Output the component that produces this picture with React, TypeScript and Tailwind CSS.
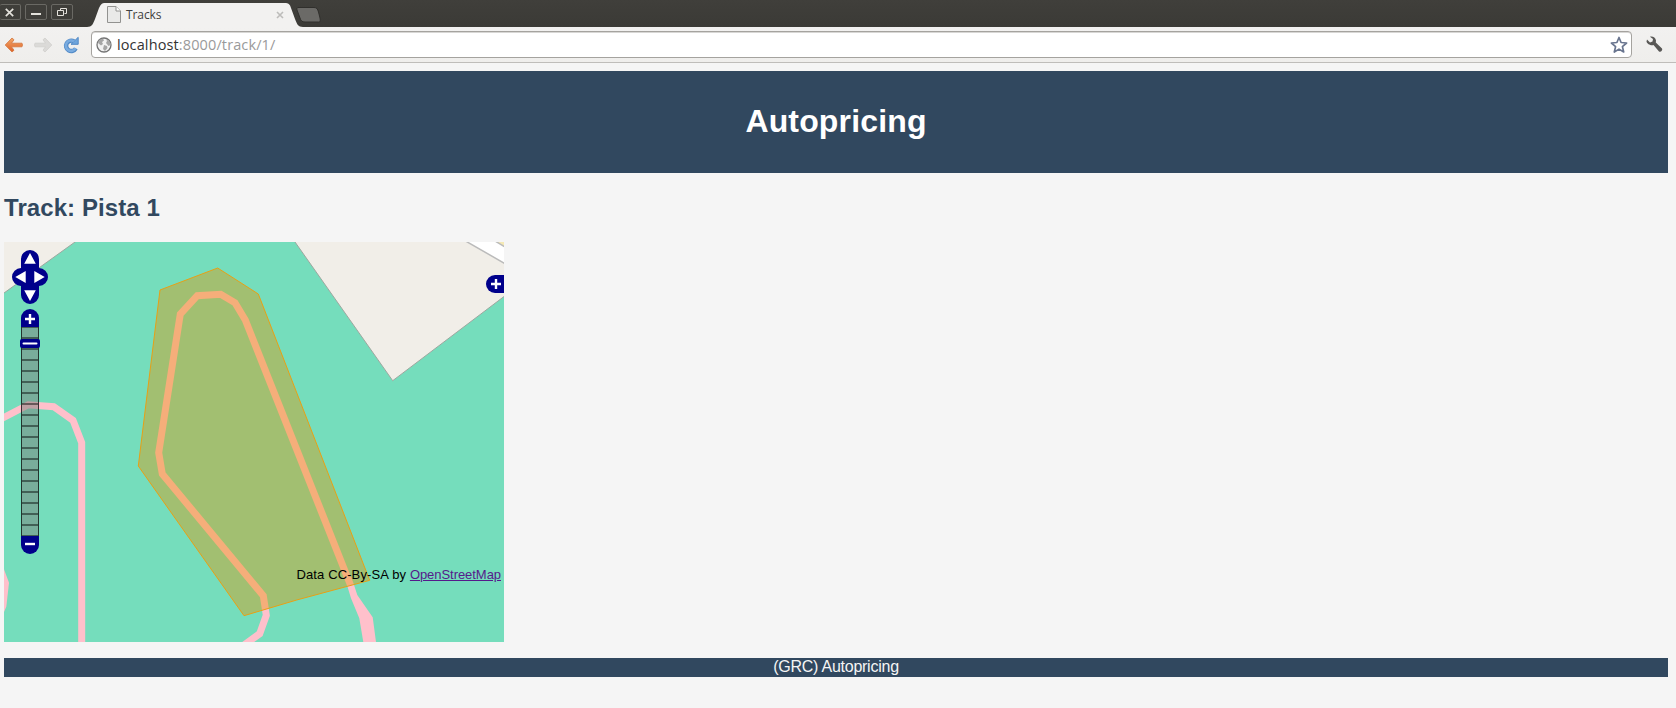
import React from 'react';

function WindowButton({ children, className }: { children: React.ReactNode; className: string }) {
  return (
    <div className={`flex h-4 items-center justify-center rounded-[2px] border border-[#6a6964] bg-[#3f3e3a] ${className}`}>
      {children}
    </div>
  );
}

function TabStrip() {
  return (
    <div className="flex h-[27px] items-start bg-linear-to-b from-[#403f3b] to-[#3b3a36]">
      <div className="flex gap-1 pt-1">
        <WindowButton className="w-[21px] border-l-0">
          <svg width="9" height="9" viewBox="0 0 9 9" className="mr-px" stroke="#e4e2dc" strokeWidth="1.7">
            <path d="M.8.8l7.4 7.4M8.2.8L.8 8.2" />
          </svg>
        </WindowButton>
        <WindowButton className="w-[22px]">
          <svg width="10" height="10" viewBox="0 0 10 10">
            <path d="M0 6h10v2H0z" fill="#e4e2dc" />
          </svg>
        </WindowButton>
        <WindowButton className="w-[22px]">
          <svg width="10" height="9" viewBox="0 0 10 9" fill="none" stroke="#e4e2dc">
            <path d="M3.500 2.500V.5h6v5h-2M.5 2.500h6v5h-6z" />
          </svg>
        </WindowButton>
      </div>
      <div className="relative ml-[14px] h-[27px] w-[216px]">
        <svg width="216" height="27" viewBox="0 0 216 27" className="absolute inset-0">
          <path d="M0 27C5 27 6 24 8 19L12 8C14 4 15 3 18 3H198C201 3 203 4 204 8L208 19C210 24 211 27 216 27Z" fill="#f2f1f0" />
        </svg>
        <div className="relative flex h-[27px] items-center pt-[2px] pl-[20px]">
          <svg width="14" height="17" viewBox="0 0 14 17">
            <path d="M.5.5h8.500l4.500 4.500v11.500H.5z" fill="#e9e9e8" stroke="#929290" />
            <path d="M9 .5v4.500h4.500" fill="#fff" stroke="#929290" />
          </svg>
          <span className="ml-[5px] font-['Open_Sans',sans-serif] text-[12px] leading-4 tracking-[-0.1px] text-[#3f3f3f]">Tracks</span>
          <svg width="8" height="8" viewBox="0 0 8 8" className="ml-auto mr-[19px]" stroke="#bdbcba" strokeWidth="1.6">
            <path d="M1 1l6 6M7 1L1 7" />
          </svg>
        </div>
      </div>
      <svg width="26" height="16" viewBox="0 0 26 16" className="-ml-[7px] mt-[7px]">
        <path d="M3 .5H18C21 .5 21.500 2 22.500 5L24 11C24.500 14 24.500 15 22.500 15H9C6 15 5 14 4 11L1 3C.3 1 1 .5 3 .5Z" fill="#6b6a67" stroke="#302f2c" />
      </svg>
    </div>
  );
}

function Toolbar() {
  return (
    <div className="flex h-9 items-center border-b border-[#bfbdba] bg-linear-to-b from-[#f2f1f0] to-[#efeeec]">
      <svg width="20" height="16" viewBox="0 0 20 16" className="ml-1">
        <defs>
          <linearGradient id="back" x1="0" y1="0" x2="0" y2="1">
            <stop offset="0" stopColor="#f3a768" />
            <stop offset="1" stopColor="#dd6228" />
          </linearGradient>
        </defs>
        <path d="M8 1L1.200 8 8 15l2-1.800L7.500 9.800H18Q19 8 18 6.200H7.500L10 2.800z" fill="url(#back)" stroke="#d4763f" strokeWidth=".8" strokeLinejoin="round" />
      </svg>
      <svg width="20" height="16" viewBox="0 0 20 16" className="ml-[9px]">
        <path d="M12 1l6.800 7L12 15l-2-1.800 2.500-3.400H2Q1 8 2 6.200h10.500L10 2.800z" fill="#dbdad8" stroke="#d0cfcd" strokeWidth=".8" strokeLinejoin="round" />
      </svg>
      <svg width="18" height="18" viewBox="0 0 18 18" className="ml-[9px]">
        <path d="M12 5.400A5.200 5.200 0 1 0 13.800 12.500" fill="none" stroke="#5189c6" strokeWidth="4.400" />
        <path d="M16.200 1.300V8.300H9z" fill="#6ea5dc" stroke="#5189c6" strokeLinejoin="round" />
        <path d="M12 5.400A5.200 5.200 0 1 0 13.600 12.200" fill="none" stroke="#79abdf" strokeWidth="2.600" />
      </svg>
      <div className="ml-[11px] flex h-[27px] w-[1541px] items-center rounded-[4px] border border-[#a5a39f] bg-white pl-[4px] shadow-[inset_0_1px_0_#d8d7d5]">
        <svg width="16" height="16" viewBox="0 0 16 16">
          <circle cx="8" cy="8" r="7" fill="#f1f1f1" stroke="#737373" strokeWidth="1.300" />
          <path d="M3 3l4-1.500 1 2L6 5l1 2-2 1.500L2 6zM8 8l3 1 .5 2L9 14 7 12zM10 2l4 3 .5 3-2 1L10 6l1-2z" fill="#a5a5a5" />
        </svg>
        <span className="ml-[5px] font-['Open_Sans',sans-serif] text-[14.500px] tracking-[0.12px] text-[#9a9a9a]"><span className="text-[#333]">localhost</span>:8000/track/1/</span>
        <svg width="18" height="18" viewBox="0 0 18 18" className="ml-auto mr-[3px]">
          <path d="M9 1.500l2.100 5 5.500.5-4.200 3.600 1.300 5.400L9 13.100 4.300 16l1.300-5.400L1.400 7l5.500-.5z" fill="#fff" stroke="#69758f" strokeWidth="1.700" strokeLinejoin="round" />
        </svg>
      </div>
      <svg width="17" height="17" viewBox="0 0 17 17" className="ml-[14px]">
        <path d="M1 3.500L4 6.500 6.500 5.500 7 3 4 .8C6.500 0 9.500 1.500 10 4.500L9.800 6.500 16 12.500C17 14 15 16.500 13 15.500L7.500 9C5 10 1 8 .5 5.500z" fill="#595856" />
      </svg>
    </div>
  );
}

const ticks = Array.from({ length: 18 }, (_, i) => 96 + i * 11);

function TrackMap() {
  return (
    <div className="relative h-[400px] w-[500px] overflow-hidden bg-[#75ddbc]">
      <svg width="500" height="400" viewBox="0 0 500 400" className="absolute inset-0">
        <g fill="#f1eee8" stroke="#9da79f" strokeWidth="1">
          <path d="M-2 -2H73.800L0 51L-2 52.400Z" />
          <path d="M289.600 -2L388.700 138.700L502 53V-2Z" />
        </g>
        <path d="M461 -1.300L502 22.200V-2Z" fill="#fff" stroke="#bbb" strokeWidth="1.500" />
        <path d="M490 -1.600L502 5.500V-2Z" fill="#f5e9b5" stroke="#bbb" strokeWidth="1.500" />
        <g fill="none" stroke="#ffc0cb" strokeWidth="7">
          <path d="M-4 177.500L24.300 162.700L49.700 164.700L69 178.300L77.700 200.700V402" />
          <path d="M346.500 343L241.300 78L231 60.700L216.700 52.300L193.300 53.700L176.300 72L154.700 210.700L158.300 232L259.300 353.700L262.300 373.300L255.700 391.700L238 404.500" />
        </g>
        <path d="M0 327.300L5 340.700L2.300 364.700L0 370Z" fill="#ffc0cb" />
        <path d="M343 343L347 356.300L355.300 376.300L359.300 400H372L368.700 375.300L353.300 353L349.700 342Z" fill="#ffc0cb" />
        <path d="M156 48L213.700 26L254.300 52L365.700 338.300L292.700 358L240 373.700L134.300 224Z" fill="#e79300" fillOpacity="0.4" stroke="#e8a015" strokeWidth="1" />
        <g>
          <path d="M17 17a9 9 0 0 1 18 0v9a9 9 0 0 1 0 18v9a9 9 0 0 1-18 0v-9a9 9 0 0 1 0-18z" fill="#00008b" />
          <path d="M26 11l5.800 10.700H20.200zM26 59l5.800-10.700H20.200zM11.300 35l10.400-6v12zM40.700 35l-10.400-6v12z" fill="#fff" />
        </g>
        <path d="M17 85V76a9 9 0 0 1 18 0v9z" fill="#00008b" />
        <path d="M21 77h10M26 72v10" stroke="#fff" strokeWidth="2.400" />
        <path d="M17 85h18v209H17z" fill="#7e7e7a" fillOpacity="0.5" />
        <path d="M17.500 85v209M34.500 85v209" stroke="#000" strokeOpacity="0.7" />
        {ticks.map((y) => (
          <path key={y} d={`M18 ${y}h16`} stroke="#000" strokeOpacity="0.45" strokeWidth="2" />
        ))}
        <path d="M18 85.500h16M18 293.500h16" stroke="#000" strokeOpacity="0.45" />
        <rect x="16" y="97" width="20" height="9" rx="2" fill="#00008b" />
        <path d="M19.500 101.500h13" stroke="#fff" strokeWidth="2" strokeLinecap="round" />
        <path d="M17 294v9a9 9 0 0 0 18 0v-9z" fill="#00008b" />
        <path d="M21 302h10" stroke="#fff" strokeWidth="2.400" />
        <path d="M500 33h-9a9 9 0 0 0 0 18h9z" fill="#00008b" />
        <path d="M487 42h10M492 37v10" stroke="#fff" strokeWidth="2.400" />
      </svg>
      <div className="absolute right-[3px] bottom-[58px] text-[13px] leading-[18px] whitespace-nowrap text-black">
        <span className="tracking-[0.13px]">Data CC-By-SA by </span>
        <a href="#" className="tracking-[-0.05px] text-[#551a8b] underline">OpenStreetMap</a>
      </div>
    </div>
  );
}

export default function App() {
  return (
    <div className="h-[708px] overflow-hidden bg-[#f5f5f5] font-['Liberation_Sans',sans-serif]">
      <TabStrip />
      <Toolbar />
      <div className="mr-2 ml-1 flex flex-col pt-2">
        <header className="flex h-[102px] items-center justify-center bg-[#31485f] pb-[2px]">
          <h1 className="text-[32px] leading-[36px] font-bold tracking-[0.15px] text-white">Autopricing</h1>
        </header>
        <h2 className="mt-5 mb-5 text-[24px] leading-[29px] font-bold tracking-[0.08px] text-[#31485f]">Track: Pista 1</h2>
        <TrackMap />
        <footer className="mt-4 h-[19px] bg-[#31485f] text-center text-[16px] leading-[18px] tracking-[-0.25px] text-[#f5f5f5]">
          (GRC) Autopricing
        </footer>
      </div>
    </div>
  );
}
